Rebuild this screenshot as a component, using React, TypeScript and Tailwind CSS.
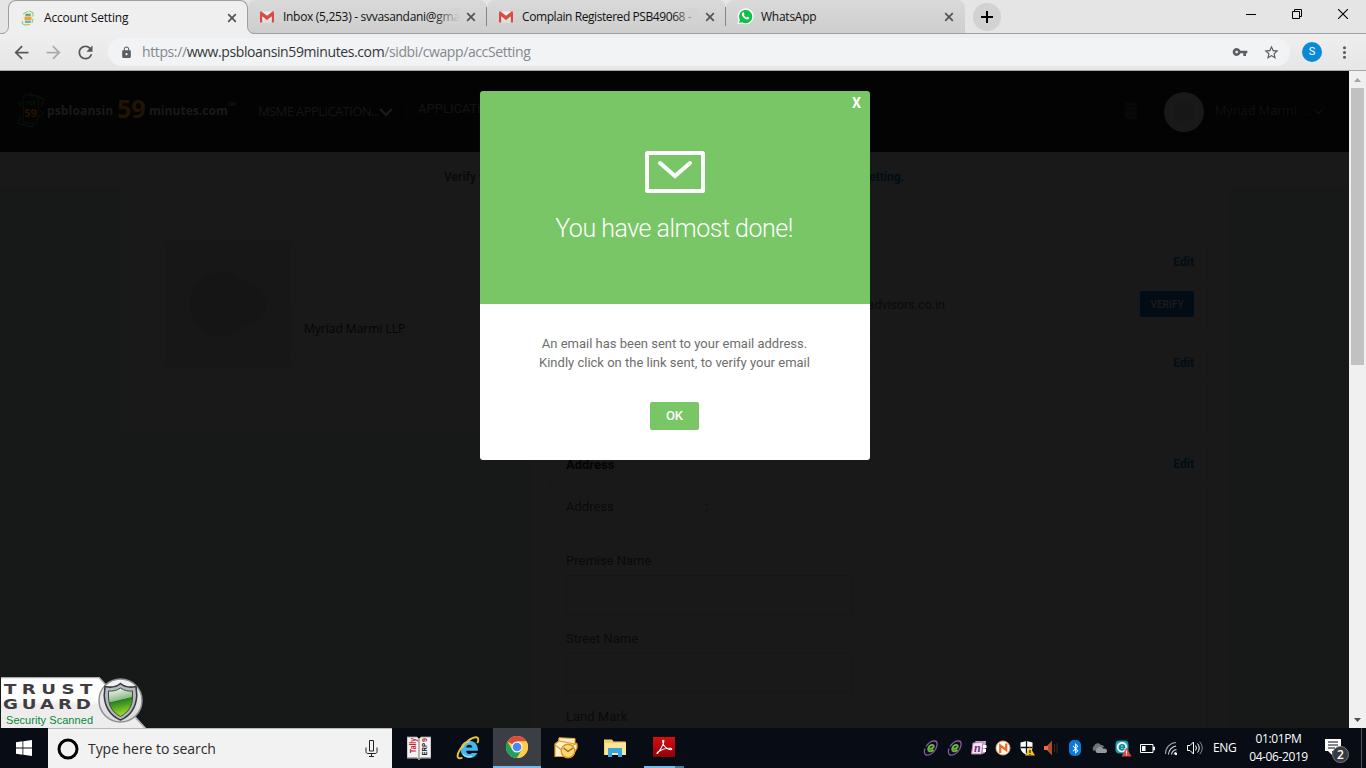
import React from "react";
import { MdArrowBack, MdArrowForward, MdRefresh, MdLock, MdVpnKey, MdStarBorder, MdMoreVert } from "react-icons/md";
import { FaBluetoothB } from "react-icons/fa";

const CloseX = () => (
  <svg width="10" height="10" viewBox="0 0 10 10" className="shrink-0">
    <path d="M1.2 1.2l7.6 7.6M8.8 1.2L1.2 8.8" stroke="#505357" strokeWidth="1.7" />
  </svg>
);

const Gmail = () => (
  <svg width="16" height="16" viewBox="0 0 16 16" className="shrink-0">
    <path d="M1 2.5h14v11H1z" fill="#eeeeee" />
    <path d="M2 13.5l6-5.5 6 5.500z" fill="#dcdcdc" />
    <path d="M1 13.500V3l7 5.600L15 3v10.500h-2.200V7.300L8 11 3.200 7.300v6.200z" fill="#d84a3d" />
    <path d="M1 3.200C1 2.500 2 2 2.800 2.700L8 6.800l5.200-4.100c.8-.7 1.800-.2 1.800.5L8 9z" fill="#d84a3d" />
  </svg>
);

const WhatsApp = () => (
  <svg width="17" height="17" viewBox="0 0 17 17" className="shrink-0">
    <path d="M.5 16.500l1.200-4.200A8 8 0 1 1 4.800 15.300z" fill="#fff" />
    <path d="M2 15l.9-3.200A6.600 6.600 0 1 1 5.200 14.200z" fill="#0cc143" />
    <path d="M5.700 4.500c.4-.3 1-.2 1.200.2l.5 1.200c.1.300 0 .6-.6 1.200.6 1.200 1.600 2 2.700 2.500.7-.8.9-1 1.200-.8l1.300.6c.4.2.2 1-.1 1.400-.7.8-1.700.9-2.700.5C7.200 10.600 5.900 9.300 5.100 7.500c-.5-1.100-.2-2.300.6-3z" fill="#fff" />
  </svg>
);

const PsbIcon = () => (
  <svg width="16" height="16" viewBox="0 0 16 16" className="shrink-0">
    <path d="M3 3.500L9 .8l4 1.700v8l-2 4-6 1-3-2z" fill="#e6f0dc" />
    <path d="M3 4L8 1.200M9 1l4 1.500v4M2.500 11L2 13.500l3 1.500 5-.5M13 9l-1 4" stroke="#8fc46c" strokeWidth="1" fill="none" />
    <path d="M5 3h6v10H5z" fill="#c2dccb" />
    <path d="M5.500 4h5v1.800h-5z" fill="#5fa06e" />
    <path d="M4.500 6.800h7v3.400h-7z" fill="#f2a23a" />
    <path d="M5 11.200h5.500v1.500H5z" fill="#4d9bc9" />
  </svg>
);

const Chevron = ({ w, color, sw }: { w: number; color: string; sw: number }) => (
  <svg width={w} height={w * 0.62} viewBox="0 0 13 8" fill="none">
    <path d="M1 1l5.500 5.500L12 1" stroke={color} strokeWidth={sw} />
  </svg>
);

function Tab({ icon, title, fade, cls }: { icon: React.ReactNode; title: string; fade?: boolean; cls: string }) {
  return (
    <div className="relative flex h-[33px] w-[239px] items-center rounded-t-[8px] bg-gradient-to-b from-[#d9d9d9] to-[#cecece] pl-[11px] pr-[11px]">
      {icon}
      <div className={"relative h-[17px] flex-1 whitespace-nowrap text-[12px] leading-[17px] text-[#111] " + cls}>
        {title}
        {fade && <span className="absolute inset-y-0 right-0 w-[26px] bg-gradient-to-r from-transparent to-[#d3d3d3]" />}
      </div>
      <span className="w-[7px]" />
      <CloseX />
    </div>
  );
}

function TabStrip() {
  return (
    <div className="relative flex h-[34px] border-b border-[#a0a0a0] bg-[#e5e5e5]">
      <div className="relative z-10 ml-[8px] flex h-[34px] w-[240px] shrink-0 items-center rounded-t-[8px] border border-b-0 border-[#a0a0a0] bg-[#efefef] pl-[11px] pr-[10px]">
        <svg className="absolute -left-[8px] bottom-0" width="8" height="8" viewBox="0 0 8 8">
          <path d="M8 0v8H0c5 0 7.500-3 7.500-8z" fill="#efefef" />
          <path d="M0 7.500c5 0 7.500-3 7.500-7.500" fill="none" stroke="#a0a0a0" />
        </svg>
        <svg className="absolute -right-[8px] bottom-0" width="8" height="8" viewBox="0 0 8 8">
          <path d="M0 0v8h8C3 8 .5 5 .5 0z" fill="#efefef" />
          <path d="M8 7.500C3 7.500.5 4.500.5 0" fill="none" stroke="#a0a0a0" />
        </svg>
        <PsbIcon />
        <span className="ml-[8px] flex-1 text-[12px] leading-[17px] tracking-[-0.2px] text-[#111]">Account Setting</span>
        <CloseX />
      </div>
      <Tab icon={<Gmail />} title="Inbox (5,253) - svvasandani@gma" fade cls="ml-[8px] tracking-[-0.3px]" />
      <span className="relative z-10 my-[7px] -ml-px w-px bg-[#858585]" />
      <Tab icon={<Gmail />} title="Complain Registered PSB49068 -" fade cls="ml-[8px] tracking-[-0.42px]" />
      <span className="relative z-10 my-[7px] -ml-px w-px bg-[#858585]" />
      <Tab icon={<WhatsApp />} title="WhatsApp" cls="ml-[7px] tracking-[-0.25px]" />
      <div className="ml-[8px] mt-[3px] flex size-[28px] items-center justify-center rounded-full bg-[#d2d2d2]">
        <svg width="12" height="12" viewBox="0 0 12 12"><path d="M6 0v12M0 6h12" stroke="#000" strokeWidth="2" /></svg>
      </div>
      <div className="ml-auto flex h-[28px] items-center pr-[18px]">
        <svg width="10" height="10" viewBox="0 0 10 10"><path d="M0 5.500h10" stroke="#000" /></svg>
        <svg className="ml-[36px]" width="10" height="10" viewBox="0 0 10 10" fill="none">
          <path d="M.5 2.500h7v7h-7zM2.500 2V.5h7v7H8" stroke="#000" />
        </svg>
        <svg className="ml-[36px]" width="10" height="10" viewBox="0 0 10 10"><path d="M0 0l10 10M10 0L0 10" stroke="#000" strokeWidth="1.100" /></svg>
      </div>
    </div>
  );
}

function Toolbar() {
  return (
    <div className="flex h-[37px] items-center border-b border-[#a6a8a9] bg-gradient-to-b from-[#efefef] to-[#e6e6e6] pl-[11px]">
      <MdArrowBack size={21} color="#55585c" />
      <MdArrowForward className="ml-[11px]" size={21} color="#aaabac" />
      <MdRefresh className="ml-[11px]" size={21} color="#55585c" />
      <div className="ml-[12px] flex h-[28px] w-[1182px] items-center rounded-full bg-[#f1f3f5] pl-[12px]">
        <MdLock size={13} color="#5a5d61" />
        <span className="ml-[9px] whitespace-nowrap text-[14px] leading-[20px] tracking-[-0.39px] text-[#84888d]">
          https://<span className="text-[#34373a]">www.psbloansin59minutes.com</span>/sidbi/cwapp/accSetting
        </span>
        <MdVpnKey className="ml-auto" size={16} color="#5a5d61" />
        <MdStarBorder className="ml-[15px] mr-[10px]" size={17} color="#5a5d61" />
      </div>
      <div className="ml-[12px] flex size-[20px] items-center justify-center rounded-full bg-[#0a8ad6] font-['Roboto'] text-[11px] text-white">S</div>
      <MdMoreVert className="ml-[13px]" size={19} color="#5a5d61" />
    </div>
  );
}

function SiteHeader() {
  return (
    <div className="flex h-[81px] shrink-0 items-start bg-[#030303]">
      <svg className="ml-[16px] mt-[21px]" width="29" height="36" viewBox="0 0 29 36" fill="none">
        <path d="M8 3l15 1-2 28-14-2z" stroke="#0b0f07" />
        <path d="M13 1l15 6-3 8M6 9L4 14M1 31l16 4 1-3" stroke="#0d1408" />
        <path d="M1 12l3-3M2 29l3-4M24 19l4 3M23 25l4-2" stroke="#11180b" strokeDasharray="2 1" />
        <text x="15" y="13" textAnchor="middle" fontSize="5" fontWeight="700" fill="#07160a">PSB</text>
        <text x="14.500" y="25" textAnchor="middle" fontSize="11" fontWeight="700" fill="#241400">59</text>
      </svg>
      <div className="ml-[2px] mt-[21px] flex h-[36px] w-[195px] items-center whitespace-nowrap text-[12px] font-bold tracking-[0.15px] text-[#1a1a1a]">
        <span className="mt-[2px] w-[70px]">psbloansin</span>
        <span className="-mt-[3px] w-[32px] text-[25px] tracking-[0px] text-[#221400]">59</span>
        <span className="mt-[2px] tracking-[0.05px]">minutes.com</span>
        <span className="-mt-[7px] text-[11px]">™</span>
      </div>
      <span className="ml-[16px] mt-[31px] w-[121px] whitespace-nowrap text-[13px] leading-[18px] tracking-[-0.6px] text-[#151515]">MSME APPLICATION...</span>
      <div className="mt-[37px]"><Chevron w={14} color="#1c1c1c" sw={2} /></div>
      <span className="ml-[13px] mt-[34px] h-[14px] w-px bg-[#060606]" />
      <span className="ml-[11px] mt-[29px] font-['Roboto'] text-[13px] leading-[18px] text-[#131313]">APPLICATION</span>
      <svg className="ml-auto mt-[31px]" width="12" height="17" viewBox="0 0 12 17">
        <rect width="12" height="4" rx="1.500" fill="#080808" />
        <rect y="5" width="12" height="12" rx="1.500" fill="#080808" />
        <path d="M3 9h2M7 9h2M3 13h2M7 13h2" stroke="#040404" strokeWidth="2" />
      </svg>
      <div className="ml-[27px] mt-[21px] flex size-[40px] items-center justify-center rounded-full bg-[#191919]">
        <span className="size-[20px] rounded-full bg-[#171717]" />
      </div>
      <span className="ml-[11px] mt-[30px] w-[98px] whitespace-nowrap font-['Roboto'] text-[13px] leading-[20px] tracking-[0.15px] text-[#0e0e11]">Myriad Marmi ...</span>
      <div className="mr-[25px] mt-[37px]"><Chevron w={11} color="#101012" sw={1.6} /></div>
    </div>
  );
}

const Edit = () => <span className="mb-[2px] font-['Roboto'] text-[12px] font-bold leading-[16px] text-[#010d16]">Edit</span>;

function Field({ label }: { label: string }) {
  return (
    <div className="h-[78px]">
      <div className="h-[21px] text-[13px] leading-[16px] text-[#0a0a0a]">{label}</div>
      <div className="mt-px h-[40px] w-[287px] rounded-[2px] border border-[#161616]" />
    </div>
  );
}

function SettingsPage() {
  return (
    <div className="flex h-[657px] w-[1349px] flex-col overflow-hidden bg-[#161918]">
      <SiteHeader />
      <div className="flex h-[36px] shrink-0 justify-between bg-[#191919] pl-[444px] pr-[445px] pt-[17px] font-['Roboto'] text-[12px] font-bold leading-[16px]">
        <span className="text-[#0a0a0a]">Verify your email</span>
        <span className="text-[#010d16]">Account setting.</span>
      </div>
      <div className="flex flex-1 items-start overflow-hidden pl-[120px] font-['Roboto']">
        <div className="flex h-[243px] w-[410px] bg-[#191919] pl-[45px] pt-[53px]">
          <div className="h-[126px] w-[126px] bg-[#171717]">
            <svg width="126" height="126" viewBox="0 0 126 126">
              <circle cx="56.500" cy="63" r="32" fill="#151515" />
              <circle cx="81" cy="63" r="21" fill="#151515" stroke="#171717" strokeWidth="1.500" />
            </svg>
          </div>
          <div className="mt-[67px] h-[40px] w-[171px] rounded-[2px] border border-[#171717] pl-[12px] font-['Open_Sans'] text-[12px] leading-[40px] text-[#040404]">
            Myriad Marmi LLP
          </div>
        </div>
        <div className="h-[600px] w-[700px] bg-[#191919] pl-[20px] pt-[56px]">
          <div className="h-[88px] w-[658px] border border-[#171717]">
            <div className="flex h-[36px] items-center justify-end border-b border-[#171717] pr-[13px]"><Edit /></div>
            <div className="flex items-start pt-[10px]">
              <span className="w-[394px] pt-[6px] text-right text-[12.500px] leading-[16px] text-[#0a0a0a]">info@myriadadvisors.co.in</span>
              <span className="ml-auto mr-[13px] flex h-[26px] w-[54px] items-center justify-center rounded-[2px] bg-[#010c15] text-[10px] font-bold text-[#1a1a1a]">VERIFY</span>
            </div>
          </div>
          <div className="mt-[13px] h-[88px] w-[658px] border border-[#171717]">
            <div className="flex h-[36px] items-center justify-end border-b border-[#171717] pr-[13px]"><Edit /></div>
          </div>
          <div className="mt-[13px] h-[400px] w-[658px] border border-[#171717]">
            <div className="flex h-[36px] items-center justify-between border-b border-[#171717] pl-[15px] pr-[13px]">
              <span className="text-[13px] font-bold leading-[16px] text-[#040404]">Address</span>
              <Edit />
            </div>
            <div className="flex h-[70px] pl-[15px] pt-[16px] text-[13px] leading-[16px] text-[#0a0a0a]">
              <span className="w-[139px]">Address</span>
              <span>:</span>
            </div>
            <div className="pl-[15px]">
              <Field label="Premise Name" />
              <Field label="Street Name" />
              <Field label="Land Mark" />
            </div>
          </div>
        </div>
      </div>
    </div>
  );
}

function Modal() {
  return (
    <div className="absolute left-[480px] top-[20px] h-[369px] w-[390px] overflow-hidden rounded-[3px] bg-[#78c666] font-['Roboto']">
      <div className="relative flex h-[213px] flex-col items-center pt-[60px] text-white">
        <span className="absolute right-[9px] top-[4px] text-[14px] font-bold leading-[16px]">X</span>
        <svg width="60" height="42" viewBox="0 0 60 42" fill="none" stroke="#fff" strokeWidth="4">
          <rect x="2" y="2" width="56" height="38" rx=".6" />
          <path d="M15 12l15 13 15-13" strokeLinecap="round" />
        </svg>
        <h1 className="mr-[2px] mt-[19px] text-[25px] font-light leading-[34px] tracking-[-0.5px]">You have almost done!</h1>
      </div>
      <div className="flex h-[156px] flex-col items-center rounded-b-[3px] bg-white pr-px pt-[30px]">
        <p className="text-center text-[13px] leading-[19px] text-[#6e6e6e]">
          An email has been sent to your email address.<br />Kindly click on the link sent, to verify your email
        </p>
        <button className="mt-[30px] h-[28px] w-[49px] rounded-[2px] bg-[#78c666] text-[13px] font-medium text-white">OK</button>
      </div>
    </div>
  );
}

function TrustGuard() {
  return (
    <svg className="absolute bottom-0 left-0" width="146" height="51" viewBox="0 0 146 51">
      <defs>
        <linearGradient id="tgBg" x2="0" y2="1"><stop offset=".45" stopColor="#fff" /><stop offset=".55" stopColor="#ededed" /></linearGradient>
        <linearGradient id="tgRing" x2="0" y2="1"><stop stopColor="#f4f4f4" /><stop offset="1" stopColor="#d8d8d8" /></linearGradient>
        <linearGradient id="tgShield" x1=".3" x2=".5" y2="1"><stop stopColor="#f3f8ef" /><stop offset=".42" stopColor="#8fba8b" /><stop offset=".45" stopColor="#25821f" /><stop offset="1" stopColor="#a4e026" /></linearGradient>
      </defs>
      <path d="M1 0h98l47 51H1z" fill="url(#tgBg)" />
      <path d="M1 .5h98l46.500 51" fill="none" stroke="#a9abac" strokeWidth="1.500" />
      <circle cx="120.500" cy="23.500" r="21.500" fill="url(#tgRing)" stroke="#8d9194" strokeWidth="1.500" />
      <path d="M120.500 6.500c3.500 3 9 4.500 15.500 3l.8 9C136 31 131 38.500 120.500 43 110 38.500 105 31 104.200 18.500l.8-9c6.500 1.500 12 0 15.500-3z" fill="#b6babd" stroke="#383c40" strokeWidth="1.600" />
      <path d="M120.500 11c3.500 2.500 8 3.500 12 3v6c0 9-4 15.500-12 19.500-8-4-12-10.500-12-19.500v-6c4 .5 8.500-.5 12-3z" fill="url(#tgShield)" stroke="#3c4a3c" />
      <g fontFamily="DejaVu Sans" fontWeight="700" fill="#403c41" fontSize="14">
        <text transform="translate(4 17.300) scale(1.3 1)" letterSpacing="4.200">TRUST</text>
        <text transform="translate(3 32.300) scale(1.3 1)" letterSpacing="3">GUARD</text>
      </g>
      <text x="6" y="47" fontFamily="Liberation Sans" fontSize="11" fill="#078838" textLength="87">Security Scanned</text>
    </svg>
  );
}

function Scrollbar() {
  return (
    <div className="flex w-[17px] flex-col items-center bg-[#f0f0f0]">
      <svg className="h-[17px]" width="7" height="17" viewBox="0 0 7 17"><path d="M0 11l3.500-4L7 11z" fill="#a3a3a3" /></svg>
      <div className="h-[277px] w-[13px] bg-[#c1c1c1]" />
      <svg className="mt-auto h-[17px]" width="7" height="17" viewBox="0 0 7 17"><path d="M0 7l3.500 4L7 7z" fill="#505050" /></svg>
    </div>
  );
}

const Tally = () => (
  <svg width="24" height="24" viewBox="0 0 24 24">
    <path d="M0 1h10l2 2 2-2h10v21H14l-2 2-2-2H0z" fill="#f3f3f3" stroke="#9a9a9a" strokeWidth=".8" />
    <path d="M12 3v20M0 22h10l2 1 2-1h10" stroke="#8c8c8c" fill="none" strokeWidth="1.200" />
    <text transform="translate(9 17) rotate(-90)" fontFamily="Liberation Sans" fontSize="8.500" fill="#c4202c" fontWeight="700" textLength="15" lengthAdjust="spacingAndGlyphs">Tally</text>
    <text transform="translate(20 19.500) rotate(-90)" fontFamily="Liberation Sans" fontSize="7" fill="#111" fontWeight="700" textLength="12.500" lengthAdjust="spacingAndGlyphs">ERP</text>
    <text transform="translate(20 6) rotate(-90)" fontFamily="Liberation Sans" fontSize="7" fill="#c4202c" fontWeight="700">9</text>
  </svg>
);

const IE = () => (
  <svg width="24" height="24" viewBox="0 0 24 24" fill="none">
    <path d="M21.500 17c-1.500 3-4.500 5-8.200 5-5 0-8.800-3.700-8.800-8.500S8.300 4.800 13.300 4.800c5.200 0 8.900 3.900 8.600 10H10.200c.2 2.200 1.400 3.200 3.100 3.200 1.200 0 2-.3 2.500-1z" fill="#42b8ee" />
    <path d="M10.300 11.500h6c-.1-1.800-1.300-2.800-3-2.800s-2.900 1-3 2.800z" fill="#0a0e16" />
    <path d="M6.500 12c1-4 4-6 7-6M7 18c2 3 6 3.500 9 2" stroke="#a9e3fa" strokeWidth="1.200" />
    <path d="M6.500 21.500C1 24 0 20 4 13.500 8 7 16 .8 20.500 1.200c2.500.3 2 3.600.8 6" stroke="#f3c130" strokeWidth="1.900" />
  </svg>
);

const Chrome = () => (
  <svg width="22" height="22" viewBox="0 0 22 22">
    <circle cx="11" cy="11" r="11" fill="#fdcd47" />
    <path d="M11 11L1.470 5.500A11 11 0 0 1 20.530 5.500H11z" fill="#dd4d3f" />
    <path d="M1.470 5.500A11 11 0 0 0 11 22L15.760 13.750 11 11 6.240 13.750z" fill="#1fa05e" />
    <path d="M11 22l4.760-8.250A5.500 5.500 0 0 0 15.760 8.250L11 5.500h9.530A11 11 0 0 1 11 22z" fill="#fdcd47" />
    <circle cx="11" cy="11" r="5.500" fill="#f4f4f4" />
    <circle cx="11" cy="11" r="4.300" fill="#4987f1" />
  </svg>
);

const Outlook = () => (
  <svg width="24" height="22" viewBox="0 0 24 22">
    <path d="M5 .8l16 .7v12H4z" fill="#fdf0c8" stroke="#e9a62c" />
    <path d="M1 7l4-3 16 3h2v4L18 19.500H1z" fill="#fff4d2" stroke="#e79b26" strokeWidth="1.200" />
    <path d="M1 8l8 6 14-8" fill="none" stroke="#e79b26" strokeWidth="1.200" />
    <circle cx="14" cy="14" r="6.800" fill="#f9d877" stroke="#db9620" strokeWidth="1.400" />
    <path d="M9.500 11l4.500 3.500 5-3.500" stroke="#9a6211" fill="none" strokeWidth="1.300" />
  </svg>
);

const Explorer = () => (
  <svg width="22" height="20" viewBox="0 0 22 20">
    <path d="M0 1.500h8l1.500 2H21a1 1 0 0 1 1 1V17H0z" fill="#f3cf6e" />
    <path d="M1 5h21v12H1z" fill="#fde597" />
    <path d="M4 10h14v9h-4v-4H8v4H4z" fill="#36a4e0" />
  </svg>
);

const Acrobat = () => (
  <svg width="22" height="20" viewBox="0 0 22 20">
    <defs><linearGradient id="acro" x2="0" y2="1"><stop stopColor="#d90b12" /><stop offset="1" stopColor="#8e0408" /></linearGradient></defs>
    <path d="M0 0h22v20H0z" fill="url(#acro)" />
    <path d="M4.500 16.500c2-3.500 6-7.500 6.300-12.300.1-1.500-1.400-1.300-1.200.3.600 4.500 4.500 8.500 8.400 8.200 1.200-.2.900-1.400-.7-1.500-4-.2-8.800 1.300-12 3.500-1.400 1.200-1.800 1.900-.8 1.800z" fill="none" stroke="#fff" strokeWidth="1.100" />
  </svg>
);

const GreenE = () => (
  <svg width="16" height="16" viewBox="0 0 16 16" fill="none">
    <path d="M3 6.500C5 3 9 .8 12 1c3 .4 2.500 5 .5 8.500C10.500 13 6.500 15.500 3.500 15 1 14.500 1 11 2 8.500" stroke="#8459a6" strokeWidth="1.300" />
    <path d="M5 8.800c3.500.2 6-.8 5.800-2.700-.3-1.700-3-1.500-4.500.3-1.400 1.700-1.500 4.400.2 4.800 1.400.3 2.800-.4 4-1.500" stroke="#6fb33f" strokeWidth="2" />
  </svg>
);

function Tray() {
  const items: React.ReactNode[] = [
    <GreenE />,
    <GreenE />,
    <svg width="16" height="16" viewBox="0 0 16 16">
      <path d="M4 1h11l-1 12-3 1z" fill="#cfa3cb" /><path d="M12 5h3.500v3H12zM12 9h3v3h-3z" fill="#fff" />
      <path d="M2 3l10-1-1.500 12H.5z" fill="#f0e6f2" stroke="#b27fb4" />
      <text x="3" y="11.500" fontFamily="Liberation Serif" fontSize="12" fontWeight="700" fontStyle="italic" fill="#7b2b80">n</text>
    </svg>,
    <svg width="16" height="16" viewBox="0 0 16 16">
      <circle cx="8" cy="8" r="7" fill="#fff" stroke="#f4a06c" strokeWidth="1" />
      <path d="M5.200 13V5.500l6 4.500V3.500" fill="none" stroke="#ef6a1f" strokeWidth="2.200" />
    </svg>,
    <svg width="16" height="16" viewBox="0 0 16 16">
      <path d="M7.500 1l6 1.500V7c0 4-2.500 6-6 8-3.500-2-6-4-6-8V2.500z" fill="#fff" />
      <path d="M7.500 1v14M1.500 7.500h12" stroke="#0a0e16" strokeWidth="1.300" />
      <path d="M11 7l5 8.500H6z" fill="#fbbc17" /><path d="M11 10v3M11 14v1" stroke="#222" strokeWidth="1.200" />
    </svg>,
    <svg width="16" height="16" viewBox="0 0 16 16">
      <path d="M1 6h3l5-5v14l-5-5H1z" fill="#e0734e" /><path d="M5 6l4-5v14l-4-5z" fill="#b24a2a" />
      <path d="M11.500 4v8M14 3v10" stroke="#3d2720" fill="none" />
    </svg>,
    <span className="flex h-[16px] w-[12px] items-center justify-center rounded-[5px] bg-[#087bd8]"><FaBluetoothB size={11} color="#fff" /></span>,
    <svg width="16" height="12" viewBox="0 0 16 12">
      <path d="M3 9a3 3 0 0 1 0-5c1-3 5-4 7-1 2-.3 3 1 3 2z" fill="#6f7276" />
      <path d="M6 11a2.500 2.500 0 0 1 0-4.500c1-2.500 5-2.500 6 0 3-.4 4 1 4 2.500S15 11 14 11z" fill="#95989c" />
    </svg>,
    <svg width="17" height="17" viewBox="0 0 17 17">
      <rect x=".5" y=".5" width="13" height="13" rx="4" fill="#15a0aa" />
      <circle cx="7" cy="7" r="5.300" fill="#e9f7f8" />
      <path d="M4.500 7.300h5c0-3.400-5-3.400-5 0 0 3 3.500 3 4.700 1.500" stroke="#0c858f" strokeWidth="1.700" fill="none" />
      <path d="M11.500 7.500l5 9h-10z" fill="#e5423f" /><path d="M11.500 10.500v3M11.500 14.300v1" stroke="#fff" strokeWidth="1.200" />
    </svg>,
    <svg width="15" height="9" viewBox="0 0 15 9">
      <path d="M.5.500h12.500v8H.5zM13.500 3h1v3h-1z" fill="none" stroke="#fff" /><path d="M2 2h3.500v5H2z" fill="#fff" />
    </svg>,
    <svg width="14" height="14" viewBox="0 0 14 14" fill="none" stroke="#d9dbde" strokeWidth="1.100">
      <path d="M1.500 13A11 11 0 0 1 12 1.500" stroke="#9b9fa5" /><path d="M4.500 13.500A9 9 0 0 1 12 5M7.500 13.500A6 6 0 0 1 12.500 8.500M10 13.500a3 3 0 0 1 2.500-2.500" />
      <path d="M11 12h2v2h-2z" fill="#fff" stroke="none" />
    </svg>,
    <svg width="16" height="14" viewBox="0 0 16 14" fill="none" stroke="#fff">
      <path d="M.5 4.500h2.500L6.500 1v12L3 9.500H.5z" /><path d="M8.500 4.500q2 2.500 0 5M10.500 2.500q3.500 4.500 0 9" /><path d="M12.800.8q5 6.200 0 12.400" stroke="#85898e" />
    </svg>,
  ];
  return (
    <div className="ml-auto flex h-[40px] items-center">
      {items.map((it, i) => (
        <span key={i} className="flex w-[24px] items-center justify-center">{it}</span>
      ))}
      <span className="ml-[6px] w-[36px] text-[12px] tracking-[-0.4px] text-white">ENG</span>
      <div className="w-[59px] whitespace-nowrap text-center text-[12px] leading-[18px] tracking-[-0.4px] text-white">01:01PM<br />04-06-2019</div>
      <svg className="ml-[16px] mt-[5px]" width="25" height="26" viewBox="0 0 25 26">
        <path d="M1 1h16v12H8v4l-4-4H1z" fill="#fff" /><path d="M4 4h10M4 7h10M4 10h7" stroke="#0a0e16" />
        <circle cx="16.500" cy="16.500" r="8" fill="#36393d" stroke="#777b80" />
        <text x="16.500" y="21" textAnchor="middle" fontSize="12" fontWeight="600" fill="#fff">2</text>
      </svg>
      <span className="ml-[12px] mr-[4px] h-[40px] w-px bg-[#53565b]" />
    </div>
  );
}

function Taskbar() {
  return (
    <div className="flex h-[40px] bg-[#080c14]">
      <div className="flex w-[48px] items-center justify-center">
        <svg width="16" height="16" viewBox="0 0 16 16" fill="#fff"><path d="M0 2.200l6.500-.9v6.200H0zM7.300 1.200L16 0v7.500H7.300zM0 8.400h6.500v6.300L0 13.800zM7.300 8.400H16V16l-8.700-1.200z" /></svg>
      </div>
      <div className="flex w-[344px] items-center border-t border-[#b9b9b9] bg-[#f2f2f2] pl-[9px]">
        <svg width="22" height="22" viewBox="0 0 22 22"><circle cx="11" cy="11" r="9" fill="none" stroke="#000" strokeWidth="3" /></svg>
        <span className="ml-[9px] text-[14px] tracking-[-0.05px] text-[#2b2b2b]">Type here to search</span>
        <svg className="ml-auto mr-[14px]" width="13" height="17" viewBox="0 0 13 17" fill="none" stroke="#222">
          <path d="M4.500.500h4v10.500h-4zM1 7.500v4c0 1.500.8 2 2 2h7c1.200 0 2-.5 2-2v-4M6.500 13.500v3M4 16.500h5" />
        </svg>
      </div>
      <div className="ml-[3px] flex">
        <span className="flex w-[49px] items-center justify-center pr-px"><Tally /></span>
        <span className="flex w-[49px] items-center justify-center pr-[2px]"><IE /></span>
        <span className="flex w-[48px] items-center justify-center border-b-2 border-[#76b9ed] bg-[#3b3e44]"><Chrome /></span>
        <span className="flex w-[49px] items-center justify-center"><Outlook /></span>
        <span className="flex w-[49px] items-center justify-center"><Explorer /></span>
        <span className="flex w-[49px] flex-col items-center pt-[9px]">
          <Acrobat />
          <span className="mt-auto flex h-[2px]"><span className="w-[31px] bg-[#76b9ed]" /><span className="w-[9px] bg-[#4c769a]" /></span>
        </span>
      </div>
      <Tray />
    </div>
  );
}

export default function App() {
  return (
    <div className="flex h-[768px] w-[1366px] flex-col overflow-hidden font-['Open_Sans',sans-serif]">
      <TabStrip />
      <Toolbar />
      <div className="relative flex h-[657px]">
        <SettingsPage />
        <Scrollbar />
        <Modal />
        <TrustGuard />
      </div>
      <Taskbar />
    </div>
  );
}
